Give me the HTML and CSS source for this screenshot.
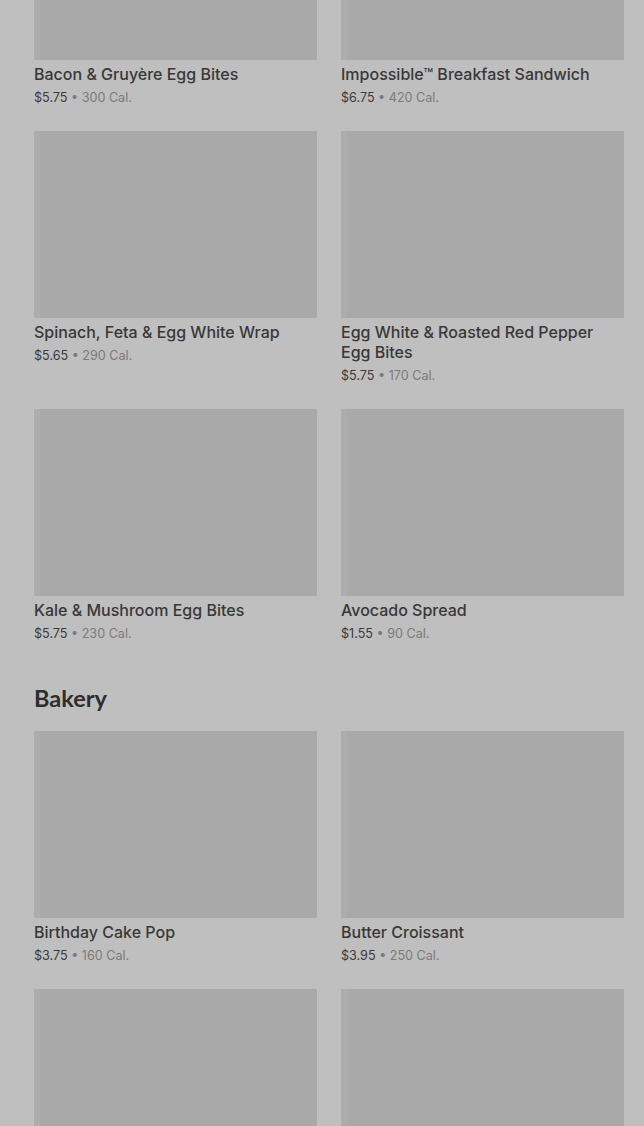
FILE: index.html
```html
<!DOCTYPE html>
<html lang="en">
<head>
  <meta charset="UTF-8">
  <meta name="viewport" content="width=device-width, initial-scale=1.0">
  <title>Menu</title>
  <link rel="stylesheet" href="styles.css">
</head>
<body>
  <div class="page">
    <!-- Breakfast (continua dall'alto) -->
    <section class="section section-first">
      <div class="grid">
        <div class="item">
          <div class="thumb"></div>
          <p class="name">Bacon &amp; Gruyère Egg Bites</p>
          <p class="meta"><span class="price">$5.75</span> • 300 Cal.</p>
        </div>
        <div class="item">
          <div class="thumb"></div>
          <p class="name">Impossible™ Breakfast Sandwich</p>
          <p class="meta"><span class="price">$6.75</span> • 420 Cal.</p>
        </div>
        <div class="item">
          <div class="thumb"></div>
          <p class="name">Spinach, Feta &amp; Egg White Wrap</p>
          <p class="meta"><span class="price">$5.65</span> • 290 Cal.</p>
        </div>
        <div class="item">
          <div class="thumb"></div>
          <p class="name">Egg White &amp; Roasted Red Pepper Egg Bites</p>
          <p class="meta"><span class="price">$5.75</span> • 170 Cal.</p>
        </div>
        <div class="item">
          <div class="thumb"></div>
          <p class="name">Kale &amp; Mushroom Egg Bites</p>
          <p class="meta"><span class="price">$5.75</span> • 230 Cal.</p>
        </div>
        <div class="item">
          <div class="thumb"></div>
          <p class="name">Avocado Spread</p>
          <p class="meta"><span class="price">$1.55</span> • 90 Cal.</p>
        </div>
      </div>
    </section>

    <section class="section">
      <h2 class="section-title">Bakery</h2>
      <div class="grid">
        <div class="item">
          <div class="thumb"></div>
          <p class="name">Birthday Cake Pop</p>
          <p class="meta"><span class="price">$3.75</span> • 160 Cal.</p>
        </div>
        <div class="item">
          <div class="thumb"></div>
          <p class="name">Butter Croissant</p>
          <p class="meta"><span class="price">$3.95</span> • 250 Cal.</p>
        </div>
        <div class="item">
          <div class="thumb"></div>
        </div>
        <div class="item">
          <div class="thumb"></div>
        </div>
      </div>
    </section>
  </div>
</body>
</html>
```

FILE: styles.css
```css
body {
  margin: 0;
  padding: 0;
  background-color: #bfbfbf;
  font-family: Inter, "Noto Sans", sans-serif;
  overflow: hidden;
}
.page {
  padding: 0 20px 0 34px;
}
.section-first {
  margin-top: -127px; /* pagina scrollata */
}
.section-title {
  margin: 41px 0 19px;
  font-family: Lato, "Noto Sans", sans-serif;
  font-size: 23.5px;
  line-height: 28px;
  font-weight: 700;
  color: #2e2e2e;
}
.grid {
  display: grid;
  grid-template-columns: 1fr 1fr;
  column-gap: 24px;
  row-gap: 24px;
}
.thumb {
  height: 187px;
  background-color: #a9a9a9;
  background-image: linear-gradient(90deg, #adadad 0, #adadad 6px, #a9a9a9 6px);
}
.name {
  margin: 4px 0 0;
  font-size: 16px;
  line-height: 20px;
  font-weight: 500;
  color: #383838;
}
.meta {
  margin: 4px 0 0;
  font-size: 12.6px;
  line-height: 19px;
  color: #7a7a7a;
}
.price {
  color: #3a3a3a;
}
```
